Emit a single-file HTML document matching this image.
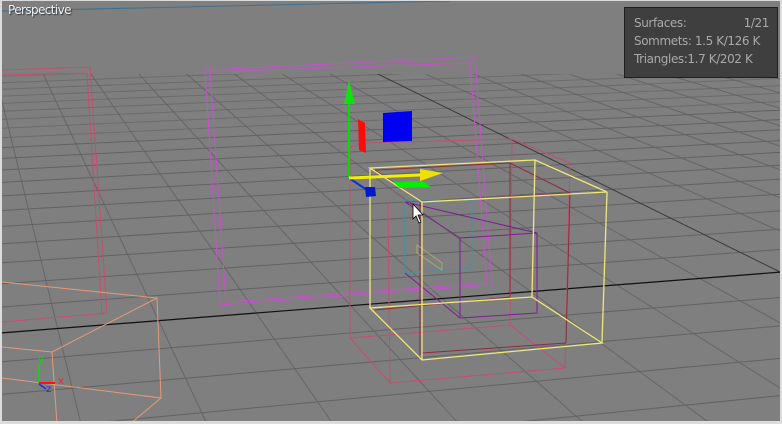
<!DOCTYPE html>
<html><head><meta charset="utf-8"><style>
html,body{margin:0;padding:0;width:782px;height:424px;overflow:hidden;background:#dcdcdc}
#vp{position:absolute;left:2px;top:1px;width:778px;height:420px;background:#7f7f7f;overflow:hidden}
svg{position:absolute;left:-2px;top:-1px;display:block}
.persp{position:absolute;left:6px;top:2px;color:#f2f2f2;font:12px "DejaVu Sans","Liberation Sans",sans-serif;letter-spacing:-0.6px;text-shadow:1px 1px 1px #333}
.info{position:absolute;left:622px;top:6px;width:152px;height:69px;background:#3f3f3f;border:1px solid #1e1e1e;color:#a9a9a9;font:12px "DejaVu Sans","Liberation Sans",sans-serif;letter-spacing:-0.4px}
.info div{position:absolute;left:9px;right:8px;height:18px;line-height:18px}
.info span{position:absolute;right:0}
</style></head><body>
<div id="vp">
<svg width="782" height="421" viewBox="0 0 782 421" xmlns="http://www.w3.org/2000/svg">
<defs><clipPath id="gc"><rect x="0" y="74" width="782" height="360"/></clipPath></defs>
<g id="grid" clip-path="url(#gc)" stroke="#626262" stroke-width="1" fill="none"></g>
<line x1="0" y1="333" x2="782" y2="272" stroke="#111" stroke-width="1.2"/>
<line x1="2" y1="11" x2="450" y2="1" stroke="#3f6f90" stroke-width="1"/>
<g fill="none" stroke-width="1">
<polyline points="2,70 90,67 107,313 2,322" stroke="#c0506e"/>
<polyline points="2,75 87,73 102,315" stroke="#c0506e"/>
<polyline points="2,282 157,298 161,398 2,378" stroke="#e49a78"/>
<polyline points="2,347 52,352 157,298" stroke="#e49a78"/>
<line x1="52" y1="352" x2="57" y2="424" stroke="#e49a78"/>
<line x1="161" y1="398" x2="130" y2="424" stroke="#e49a78"/>
<polygon points="205,70 475,57 492,285 220,305" stroke="#c254c8"/>
<polygon points="210,72 470,63 487,283 226,302" stroke="#c254c8"/>
<line x1="205" y1="70" x2="212" y2="65" stroke="#c254c8"/>
<line x1="475" y1="57" x2="468" y2="64" stroke="#c254c8"/>
<polyline points="350,147 365,143 512,139 570,163 565,368 390,383 350,338 350,147" stroke="#c0506e"/>
<polyline points="512,139 510,325 350,338" stroke="#c0506e"/>
<line x1="510" y1="325" x2="565" y2="368" stroke="#c0506e"/>
<line x1="390" y1="383" x2="388" y2="202" stroke="#c0506e"/>
<polyline points="375,170 510,163 570,193 422,202 375,170" stroke="#8c2c3c"/>
<line x1="510" y1="163" x2="510" y2="297" stroke="#8c2c3c"/>
<line x1="570" y1="193" x2="566" y2="343" stroke="#8c2c3c"/>
<line x1="420" y1="202" x2="420" y2="355" stroke="#8c2c3c"/>
<line x1="422" y1="353" x2="566" y2="343" stroke="#8c2c3c"/>
<line x1="375" y1="310" x2="510" y2="297" stroke="#8c2c3c"/>
<polygon points="404,200 472,200 472,268 405,273" stroke="#4f8e9e"/>
<polygon points="417,245 442,263 442,270 417,253" stroke="#b8b868" opacity=".7"/>
<polyline points="405,202 537,233 537,313 460,318 460,238 537,233" stroke="#7e1e90"/>
<line x1="405" y1="202" x2="460" y2="238" stroke="#7e1e90"/>
<line x1="405" y1="273" x2="460" y2="318" stroke="#7e1e90"/>
<g stroke="#f0e878" stroke-width="1.3">
<polygon points="370,168 535,160 607,192 422,202"/>
<polygon points="370,308 532,297 602,343 422,360"/>
<line x1="370" y1="168" x2="370" y2="308"/>
<line x1="535" y1="160" x2="532" y2="297"/>
<line x1="607" y1="192" x2="602" y2="343"/>
<line x1="422" y1="202" x2="422" y2="360"/>
</g>
</g>
<line x1="349" y1="104" x2="349" y2="178" stroke="#00e000" stroke-width="2"/>
<polygon points="349,80 344,104 355,104" fill="#10e010"/>
<polygon points="358,119 365,123 366,153 359,150" fill="#ff0a0a"/>
<polygon points="383,113 412,111 412,141 383,142" fill="#0000f0"/>
<line x1="349" y1="178" x2="367" y2="190" stroke="#1030e0" stroke-width="2"/>
<line x1="349" y1="178" x2="420" y2="175" stroke="#f0f000" stroke-width="3"/>
<polygon points="420,169 443,173 420,181" fill="#f0e000"/>
<polygon points="393,182 423,181 431,187 400,188" fill="#00f000"/>
<polygon points="365,187 375,187 376,196 366,197" fill="#0018d0"/>
<polygon points="413,204 413,219 416,216 419,223 421,222 418,215 423,215" fill="#fff" stroke="#000" stroke-width="0.8"/>
<line x1="39" y1="365" x2="39" y2="384" stroke="#00e000" stroke-width="1.5"/>
<line x1="39" y1="383" x2="55" y2="383" stroke="#ff1010" stroke-width="2"/>
<line x1="39" y1="384" x2="46" y2="389" stroke="#1030f0" stroke-width="1.5"/>
<text x="38" y="362" fill="#00e000" font-family="DejaVu Sans, Liberation Sans, sans-serif" font-size="10">y</text>
<text x="58" y="384" fill="#ff2020" font-family="DejaVu Sans, Liberation Sans, sans-serif" font-size="10">x</text>
<text x="46" y="392" fill="#1030f0" font-family="DejaVu Sans, Liberation Sans, sans-serif" font-size="10">z</text>
</svg>
<div class="persp">Perspective</div>
<div class="info">
<div style="top:6px">Surfaces:<span>1/21</span></div>
<div style="top:24px">Sommets: 1.5 K/126 K</div>
<div style="top:42px">Triangles:1.7 K/202 K</div>
</div>
</div>
<script>
(function(){
var g=document.getElementById('grid'),s='';
for(var n=13;n<=55;n++){
 var yc=-150+8000/(n+0.68);
 var sl=-0.078*(yc+150)/452.5;
 var y0=yc-sl*391, y1=yc+sl*391;
 if(Math.max(y0,y1)<74)continue;
 var op=n>36?0.35:(n>28?0.65:1);
 s+='<line x1="0" y1="'+y0.toFixed(1)+'" x2="782" y2="'+y1.toFixed(1)+'" opacity="'+op+'"/>';
}
var vx=-57,vy=-140;
for(var k=-6;k<=40;k++){
 var xb=207+126*k;
 s+='<line x1="'+vx+'" y1="'+vy+'" x2="'+xb+'" y2="424"'+(k==7?' stroke="#3a3a3a"':' opacity="0.85"')+'/>';
}
g.innerHTML=s;
})();
</script>
</body></html>
